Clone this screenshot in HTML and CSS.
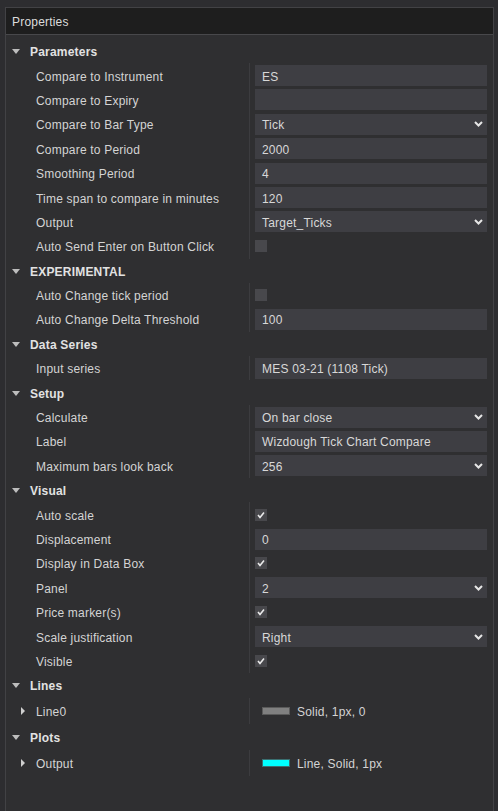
FILE: index.html
```html
<!DOCTYPE html>
<html>
<head>
<meta charset="utf-8">
<link rel="stylesheet" href="styles.css">
</head>
<body>
<div class="window">
  <div class="header">Properties</div>
  <div class="grid">
    <div class="cat"><span class="tri-down"></span>Parameters</div>
    <div class="row"><div class="lbl">Compare to Instrument</div><div class="val"><div class="box">ES</div></div></div>
    <div class="row"><div class="lbl">Compare to Expiry</div><div class="val"><div class="box"></div></div></div>
    <div class="row"><div class="lbl">Compare to Bar Type</div><div class="val"><div class="box sel">Tick<svg class="chev" viewBox="0 0 9 6"><polyline points="1,1 4.5,4.5 8,1"/></svg></div></div></div>
    <div class="row"><div class="lbl">Compare to Period</div><div class="val"><div class="box">2000</div></div></div>
    <div class="row"><div class="lbl">Smoothing Period</div><div class="val"><div class="box">4</div></div></div>
    <div class="row"><div class="lbl">Time span to compare in minutes</div><div class="val"><div class="box">120</div></div></div>
    <div class="row"><div class="lbl">Output</div><div class="val"><div class="box sel">Target_Ticks<svg class="chev" viewBox="0 0 9 6"><polyline points="1,1 4.5,4.5 8,1"/></svg></div></div></div>
    <div class="row"><div class="lbl">Auto Send Enter on Button Click</div><div class="val"><span class="chk"></span></div></div>

    <div class="cat"><span class="tri-down"></span>EXPERIMENTAL</div>
    <div class="row"><div class="lbl">Auto Change tick period</div><div class="val"><span class="chk"></span></div></div>
    <div class="row"><div class="lbl">Auto Change Delta Threshold</div><div class="val"><div class="box">100</div></div></div>

    <div class="cat"><span class="tri-down"></span>Data Series</div>
    <div class="row"><div class="lbl">Input series</div><div class="val"><div class="box">MES 03-21 (1108 Tick)</div></div></div>

    <div class="cat"><span class="tri-down"></span>Setup</div>
    <div class="row"><div class="lbl">Calculate</div><div class="val"><div class="box sel">On bar close<svg class="chev" viewBox="0 0 9 6"><polyline points="1,1 4.5,4.5 8,1"/></svg></div></div></div>
    <div class="row"><div class="lbl">Label</div><div class="val"><div class="box">Wizdough Tick Chart Compare</div></div></div>
    <div class="row"><div class="lbl">Maximum bars look back</div><div class="val"><div class="box sel">256<svg class="chev" viewBox="0 0 9 6"><polyline points="1,1 4.5,4.5 8,1"/></svg></div></div></div>

    <div class="cat"><span class="tri-down"></span>Visual</div>
    <div class="row"><div class="lbl">Auto scale</div><div class="val"><span class="chk on"><svg viewBox="0 0 12 12"><polyline points="3,6 5,8.5 9,3.5"/></svg></span></div></div>
    <div class="row"><div class="lbl">Displacement</div><div class="val"><div class="box">0</div></div></div>
    <div class="row"><div class="lbl">Display in Data Box</div><div class="val"><span class="chk on"><svg viewBox="0 0 12 12"><polyline points="3,6 5,8.5 9,3.5"/></svg></span></div></div>
    <div class="row"><div class="lbl">Panel</div><div class="val"><div class="box sel">2<svg class="chev" viewBox="0 0 9 6"><polyline points="1,1 4.5,4.5 8,1"/></svg></div></div></div>
    <div class="row"><div class="lbl">Price marker(s)</div><div class="val"><span class="chk on"><svg viewBox="0 0 12 12"><polyline points="3,6 5,8.5 9,3.5"/></svg></span></div></div>
    <div class="row"><div class="lbl">Scale justification</div><div class="val"><div class="box sel">Right<svg class="chev" viewBox="0 0 9 6"><polyline points="1,1 4.5,4.5 8,1"/></svg></div></div></div>
    <div class="row"><div class="lbl">Visible</div><div class="val"><span class="chk on"><svg viewBox="0 0 12 12"><polyline points="3,6 5,8.5 9,3.5"/></svg></span></div></div>

    <div class="cat"><span class="tri-down"></span>Lines</div>
    <div class="row tall"><div class="lbl"><span class="tri-right"></span>Line0</div><div class="val stroke"><span class="swatch gray"></span>Solid, 1px, 0</div></div>

    <div class="cat tallc"><span class="tri-down"></span>Plots</div>
    <div class="row tall"><div class="lbl"><span class="tri-right"></span>Output</div><div class="val stroke"><span class="swatch cyan"></span>Line, Solid, 1px</div></div>
  </div>
</div>
</body>
</html>
```

FILE: styles.css
```css
html, body {
  margin: 0;
  padding: 0;
}
body {
  background: #2d2d30;
  width: 498px;
  height: 811px;
  overflow: hidden;
  padding: 7px 4px 0 5px;
  box-sizing: border-box;
  font-family: "Liberation Sans", Arial, sans-serif;
  font-size: 12px;
  letter-spacing: 0.2px;
  color: #d6d6d6;
}
.window {
  height: 100%;
  border: 1px solid #424245;
  border-bottom: none;
  background: #2f2f31;
  box-sizing: border-box;
}
.header {
  height: 27px;
  background: #1e1e1e;
  border-bottom: 1px solid #48484b;
  padding-left: 6px;
  padding-top: 2px;
  box-sizing: border-box;
  display: flex;
  align-items: center;
  color: #dcdcdc;
}
.grid {
  padding-top: 4px;
  display: flex;
  flex-direction: column;
}
.cat {
  height: 24.4px;
  display: flex;
  align-items: center;
  font-weight: bold;
  color: #e2e2e2;
  padding-left: 6px;
  padding-top: 2px;
  box-sizing: border-box;
}
.tallc {
  height: 26px;
}
.tri-down {
  width: 0;
  height: 0;
  border-left: 4px solid transparent;
  border-right: 4px solid transparent;
  border-top: 5px solid #bdbdbd;
  margin-right: 10px;
  margin-top: -1px;
}
.tri-right {
  width: 0;
  height: 0;
  border-top: 4px solid transparent;
  border-bottom: 4px solid transparent;
  border-left: 4px solid #cfcfcf;
  margin-left: -15px;
  margin-right: 11px;
  margin-top: -1px;
}
.row {
  height: 24.4px;
  display: flex;
}
.row.tall {
  height: 26px;
}
.lbl {
  width: 243px;
  padding-left: 30px;
  padding-top: 2px;
  box-sizing: border-box;
  display: flex;
  align-items: center;
  color: #d4d4d4;
  white-space: nowrap;
}
.val {
  flex: 1;
  border-left: 1px solid #3c3c3f;
  padding: 0 6px 0 5px;
  display: flex;
  align-items: center;
}
.box {
  flex: 1;
  height: 21px;
  background: #3e3e43;
  padding-left: 7px;
  padding-right: 4px;
  padding-top: 2px;
  box-sizing: border-box;
  display: flex;
  align-items: center;
  justify-content: space-between;
  color: #d8d8d8;
}
.chev {
  width: 9px;
  height: 6px;
  fill: none;
  stroke: #e6e6e6;
  stroke-width: 2;
  margin-top: -2px;
}
.chk {
  width: 12px;
  height: 12px;
  background: #48484c;
  display: block;
}
.chk svg {
  width: 12px;
  height: 12px;
  display: block;
  fill: none;
  stroke: #eaeaea;
  stroke-width: 1.6;
}
.val.stroke {
  padding-left: 12px;
  padding-top: 2px;
  color: #d4d4d4;
}
.swatch {
  width: 26px;
  height: 6px;
  margin-right: 7px;
  margin-top: -1px;
}
.swatch.gray {
  background: #808080;
  border: 1px solid #5a5a5a;
}
.swatch.cyan {
  background: #00ffff;
  border: 1px solid #3a6f70;
}
```
